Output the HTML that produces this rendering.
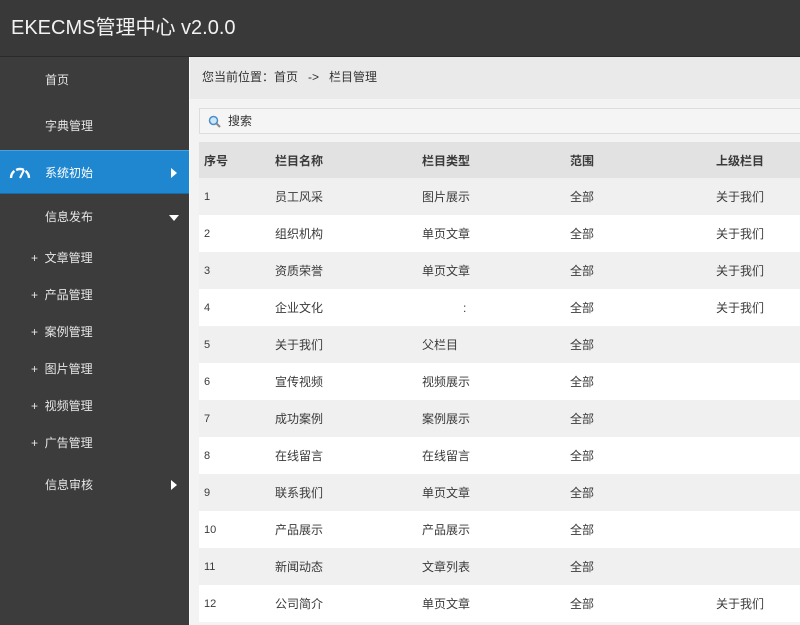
<!DOCTYPE html>
<html><head><meta charset="utf-8"><style>
*{margin:0;padding:0;box-sizing:border-box}
body{width:800px;height:625px;overflow:hidden;background:#3b3b3b;font-family:"Liberation Sans","Noto Sans CJK SC",sans-serif;font-size:12px;position:relative}
.hdr{position:absolute;left:0;top:0;width:800px;height:57px;background:#393939;color:#f2f2f2;font-size:20px;line-height:57px;padding-left:11px;border-bottom:1px solid #2a2a2a}
.side{position:absolute;left:0;top:57px;width:189px;height:568px;background:#3c3c3c;color:#e6e6e6}
.it{position:absolute;left:0;width:189px;height:44px;line-height:44px;padding-left:45px}
.act{background:#1f86d0;border-top:1px solid #4aa0e0;border-bottom:1px solid #1a6aa8;color:#fff}
.sub{position:absolute;left:31px;line-height:20px;color:#e6e6e6}
.tri-r{position:absolute;right:12px;top:17px;width:0;height:0;border-top:5px solid transparent;border-bottom:5px solid transparent;border-left:6px solid #fff}
.tri-d{position:absolute;right:10px;top:20px;width:0;height:0;border-left:5px solid transparent;border-right:5px solid transparent;border-top:6px solid #fff}
.main{position:absolute;left:189px;top:57px;width:611px;height:568px;background:#f3f3f3;border-left:1px solid #fafafa}
.bc{position:absolute;left:0;top:0;width:611px;height:42px;background:#eaeaea;line-height:40px;padding-left:12px;color:#333}
.srch{position:absolute;left:9px;top:51px;width:610px;height:26px;background:#f5f5f5;border:1px solid #ddd;line-height:24px;padding-left:28px;color:#333}
table{position:absolute;left:9px;top:85px;width:610px;border-collapse:collapse;color:#3a3a3a}
td,th{height:37px;text-align:left;font-weight:normal;padding:0 0 0 4px}
th{background:#e2e2e2;font-weight:bold;height:36px;font-size:12px}
tr.o td{background:#f0f0f0}
tr.e td{background:#fff}
td.n,th.n{font-size:11px;padding-left:5px}
th.n{font-size:12px}
</style></head><body>
<div class="hdr">EKECMS管理中心 v2.0.0</div>
<div class="side">
<div class="it" style="top:1px">首页</div>
<div class="it" style="top:47px">字典管理</div>
<div class="it act" style="top:93px">
<svg style="position:absolute;left:9px;top:13px" width="22" height="16" viewBox="0 0 22 16"><path d="M2 14 A9 9 0 0 1 20 14" fill="none" stroke="#fff" stroke-width="2.4" stroke-dasharray="8 2"/><path d="M11 14 L15 6" stroke="#fff" stroke-width="2"/></svg>
系统初始<div class="tri-r"></div></div>
<div class="it" style="top:138px">信息发布<div class="tri-d"></div></div>
<div class="sub" style="top:191px">+&nbsp; 文章管理</div>
<div class="sub" style="top:228px">+&nbsp; 产品管理</div>
<div class="sub" style="top:265px">+&nbsp; 案例管理</div>
<div class="sub" style="top:302px">+&nbsp; 图片管理</div>
<div class="sub" style="top:339px">+&nbsp; 视频管理</div>
<div class="sub" style="top:376px">+&nbsp; 广告管理</div>
<div class="it" style="top:406px">信息审核<div class="tri-r"></div></div>
</div>
<div class="main">
<div class="bc">您当前位置：首页&nbsp;&nbsp; -&gt;&nbsp;&nbsp; 栏目管理</div>
<div class="srch"><svg style="position:absolute;left:8px;top:6px" width="13" height="13" viewBox="0 0 13 13"><circle cx="5.5" cy="5.5" r="4" fill="#cfe6f8" stroke="#4a90c8" stroke-width="1.5"/><path d="M8.5 8.5 L12 12" stroke="#888" stroke-width="2"/></svg>搜索</div>
<table>
<colgroup><col style="width:72px"><col style="width:147px"><col style="width:148px"><col style="width:146px"><col></colgroup>
<tr><th class="n">序号</th><th>栏目名称</th><th>栏目类型</th><th>范围</th><th>上级栏目</th></tr>
<tr class="o"><td class="n">1</td><td>员工风采</td><td>图片展示</td><td>全部</td><td>关于我们</td></tr>
<tr class="e"><td class="n">2</td><td>组织机构</td><td>单页文章</td><td>全部</td><td>关于我们</td></tr>
<tr class="o"><td class="n">3</td><td>资质荣誉</td><td>单页文章</td><td>全部</td><td>关于我们</td></tr>
<tr class="e"><td class="n">4</td><td>企业文化</td><td style="padding-left:45px">:</td><td>全部</td><td>关于我们</td></tr>
<tr class="o"><td class="n">5</td><td>关于我们</td><td>父栏目</td><td>全部</td><td></td></tr>
<tr class="e"><td class="n">6</td><td>宣传视频</td><td>视频展示</td><td>全部</td><td></td></tr>
<tr class="o"><td class="n">7</td><td>成功案例</td><td>案例展示</td><td>全部</td><td></td></tr>
<tr class="e"><td class="n">8</td><td>在线留言</td><td>在线留言</td><td>全部</td><td></td></tr>
<tr class="o"><td class="n">9</td><td>联系我们</td><td>单页文章</td><td>全部</td><td></td></tr>
<tr class="e"><td class="n">10</td><td>产品展示</td><td>产品展示</td><td>全部</td><td></td></tr>
<tr class="o"><td class="n">11</td><td>新闻动态</td><td>文章列表</td><td>全部</td><td></td></tr>
<tr class="e"><td class="n">12</td><td>公司简介</td><td>单页文章</td><td>全部</td><td>关于我们</td></tr>
</table>
</div>
</body></html>
